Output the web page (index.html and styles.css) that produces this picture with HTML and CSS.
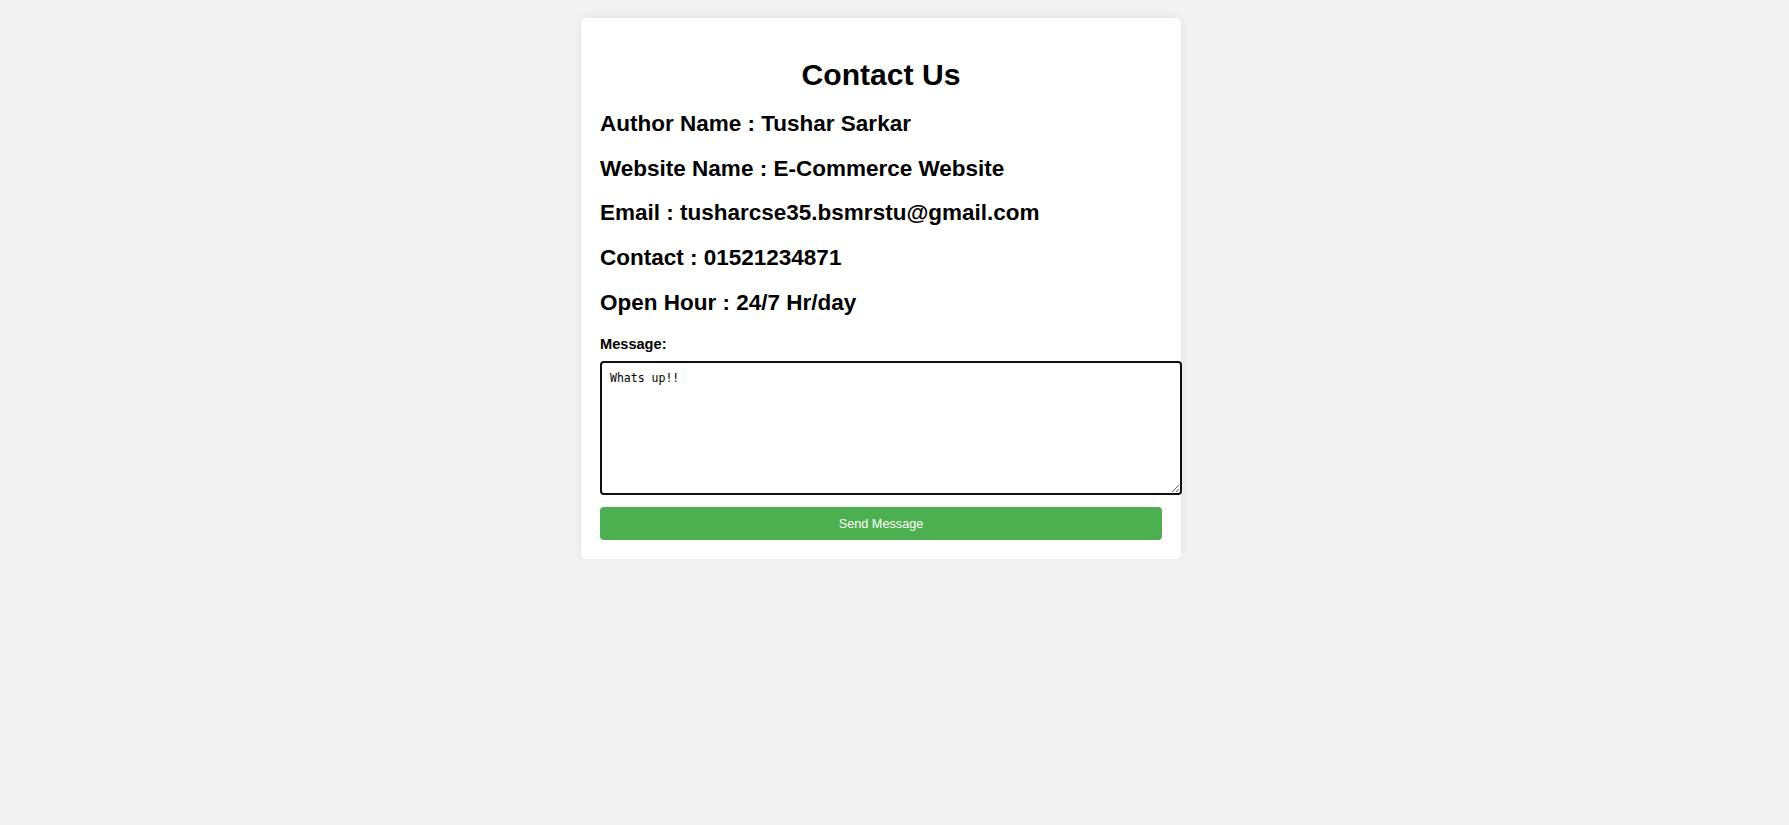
FILE: index.html
```html
<!DOCTYPE html>
<html lang="en">
<head>
<meta charset="utf-8">
<title>Contact Us</title>
<link rel="stylesheet" href="styles.css">
</head>
<body>
<div class="page">
  <div class="card">
    <h2 class="title">Contact Us</h2>
    <h3 class="info">Author Name : Tushar Sarkar</h3>
    <h3 class="info">Website Name : E-Commerce Website</h3>
    <h3 class="info">Email : tusharcse35.bsmrstu@gmail.com</h3>
    <h3 class="info">Contact : 01521234871</h3>
    <h3 class="info">Open Hour : 24/7 Hr/day</h3>
    <form class="form">
      <label class="label" for="msg">Message:</label>
      <textarea class="message" id="msg" spellcheck="false">Whats up!!</textarea>
      <button class="send" type="button">Send Message</button>
    </form>
  </div>
</div>
</body>
</html>
```

FILE: styles.css
```css
html, body {
  margin: 0;
  padding: 0;
  background: #f2f2f2;
  font-family: "Liberation Sans", Arial, sans-serif;
  color: #000;
}

.page {
  padding: 18px 27px 0 0;
  display: flex;
  justify-content: center;
}

.card {
  width: 562px;
  padding: 19px 19px 19px 19px;
  background: #fff;
  border-radius: 5px;
  box-shadow: 0 0 10px rgba(0, 0, 0, 0.08);
}

.title {
  margin: 21px 0 0 0;
  font-size: 30.1px;
  line-height: 34px;
  font-weight: bold;
  text-align: center;
}

.info {
  margin: 18.6px 0 0 0;
  font-size: 22.5px;
  line-height: 26px;
  font-weight: bold;
}

.info:first-of-type {
  margin-top: 19.3px;
}

.form {
  display: flex;
  flex-direction: column;
  align-items: flex-start;
  margin-top: 20.6px;
}

.label {
  display: block;
  font-size: 14.6px;
  line-height: 17px;
  font-weight: bold;
}

.message {
  display: block;
  box-sizing: content-box;
  width: 100%;
  height: 114px;
  margin: 8px 0 0 0;
  padding: 8px;
  border: 2px solid #101010;
  border-radius: 4px;
  outline: none;
  font-family: "DejaVu Sans Mono", monospace;
  font-size: 11.5px;
  line-height: 14px;
  color: #000;
  background: #fff;
  resize: both;
}

.send {
  display: block;
  width: 100%;
  height: 33px;
  margin-top: 12px;
  padding: 0;
  border: none;
  border-radius: 4px;
  background: #4caf50;
  color: #fff;
  font-family: "Liberation Sans", Arial, sans-serif;
  font-size: 12.7px;
  cursor: pointer;
}
```
